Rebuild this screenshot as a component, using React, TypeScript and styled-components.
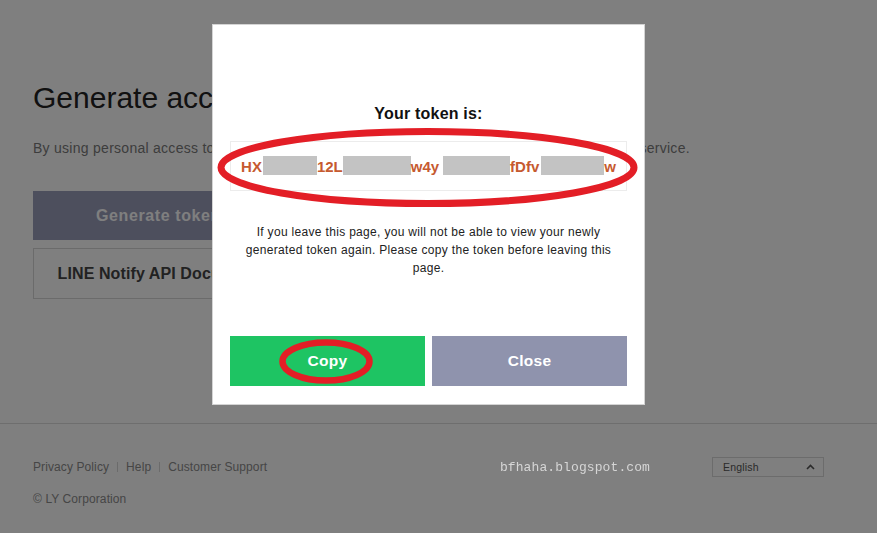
import React from "react";
import styled, { createGlobalStyle } from "styled-components";

const GlobalStyle = createGlobalStyle`
  html, body { margin: 0; padding: 0; }
  body {
    background: #ffffff;
    font-family: "Liberation Sans", Arial, sans-serif;
    color: #222;
  }
  * { box-sizing: border-box; }
`;

const Page = styled.div`
  min-height: 533px;
  display: flex;
  flex-direction: column;
  background: #ffffff;
`;

const Main = styled.main`
  height: 423px;
  padding: 80px 33px 0;
`;

const Title = styled.h1`
  margin: 0;
  font-size: 30px;
  line-height: 36px;
  font-weight: 400;
  color: #222;
  white-space: nowrap;
`;

const Lead = styled.p`
  margin: 22px 0 0;
  font-size: 14px;
  line-height: 20px;
  letter-spacing: 0.27px;
  color: #7a7a7a;
  white-space: nowrap;
`;

const ButtonStack = styled.div`
  margin-top: 33px;
  width: 251px;
  display: flex;
  flex-direction: column;
  gap: 8px;
`;

const PageButton = styled.button<{ $variant: "filled" | "outline" }>`
  height: ${(p) => (p.$variant === "filled" ? "49px" : "51px")};
  width: 100%;
  border: 1px solid ${(p) => (p.$variant === "filled" ? "#9a9ebb" : "#d6d6d6")};
  background: ${(p) => (p.$variant === "filled" ? "#9a9ebb" : "#ffffff")};
  color: ${(p) => (p.$variant === "filled" ? "#ffffff" : "#444444")};
  font-family: "Liberation Sans", Arial, sans-serif;
  font-size: 16px;
  font-weight: 700;
  letter-spacing: ${(p) => (p.$variant === "filled" ? "0.6px" : "0.1px")};
  padding: 0;
  text-align: center;
  white-space: nowrap;
`;

const Footer = styled.footer`
  border-top: 1px solid #dcdcdc;
  padding: 33px 53px 0 33px;
  flex: 1;
`;

const FooterRow = styled.div`
  display: flex;
  align-items: center;
  height: 20px;
`;

const Links = styled.nav`
  display: flex;
  align-items: center;
  font-size: 12px;
  letter-spacing: 0.1px;
  color: #8c8c8c;
`;

const Sep = styled.span`
  display: inline-block;
  width: 0;
  height: 10px;
  border-left: 1px solid #d6d6d6;
  margin: 0 8px;
`;

const Watermark = styled.span`
  position: relative;
  z-index: 20;
  margin-left: auto;
  font-family: "Liberation Mono", "DejaVu Sans Mono", monospace;
  font-size: 13px;
  color: #d6d6d6;
  letter-spacing: 0.1px;
`;

const LangSelect = styled.div`
  margin-left: 62px;
  width: 112px;
  height: 20px;
  border: 1px solid #d8d8d8;
  display: flex;
  align-items: center;
  justify-content: space-between;
  padding: 0 8px 0 10px;
  font-size: 10.5px;
  font-weight: 400;
  letter-spacing: 0.2px;
  color: #555555;
`;

const Copyright = styled.div`
  margin-top: 14px;
  font-size: 12px;
  line-height: 16px;
  letter-spacing: 0.1px;
  color: #8c8c8c;
`;

const Overlay = styled.div`
  position: fixed;
  inset: 0;
  z-index: 10;
  background: rgba(0, 0, 0, 0.5);
  padding: 24px 0 0 212px;
`;

const Modal = styled.div`
  position: relative;
  width: 433px;
  height: 381px;
  background: #ffffff;
  border: 1px solid #d4d4d4;
  padding: 79px 17px 18px;
  display: flex;
  flex-direction: column;
  align-items: center;
`;

const TokenLabel = styled.div`
  font-size: 16px;
  line-height: 20px;
  font-weight: 700;
  letter-spacing: 0.2px;
  color: #111;
`;

const TokenBox = styled.div`
  margin-top: 17px;
  width: 100%;
  height: 50px;
  border: 1px solid #ececec;
  display: flex;
  align-items: center;
  justify-content: center;
  font-size: 15px;
  font-weight: 700;
  color: #c65a30;
  white-space: nowrap;
`;

const Redact = styled.span<{ $w: number; $ml?: number }>`
  display: inline-block;
  width: ${(p) => p.$w}px;
  height: 19px;
  margin-left: ${(p) => p.$ml ?? 0}px;
  margin-top: -2px;
  background: #c3c3c3;
`;

const Notice = styled.p`
  margin: 32px 0 0;
  width: 100%;
  padding: 0 4px;
  font-size: 12px;
  line-height: 18px;
  letter-spacing: 0.32px;
  text-align: center;
  color: #222;
`;

const ActionRow = styled.div`
  margin-top: auto;
  width: 100%;
  display: flex;
  gap: 7px;
`;

const ActionButton = styled.button<{ $tone: "green" | "gray" }>`
  flex: 1;
  height: 50px;
  border: none;
  background: ${(p) => (p.$tone === "green" ? "#1ec463" : "#8f93ad")};
  color: #ffffff;
  font-family: "Liberation Sans", Arial, sans-serif;
  font-size: 15.5px;
  font-weight: 700;
  letter-spacing: 0.3px;
  padding: 0;
`;

const Annotation = styled.svg<{ $l: number; $t: number }>`
  position: absolute;
  left: ${(p) => p.$l}px;
  top: ${(p) => p.$t}px;
  overflow: visible;
  pointer-events: none;
`;

export default function App() {
  return (
    <>
      <GlobalStyle />
      <Page>
        <Main>
          <Title>Generate access token (For developers)</Title>
          <Lead>
            By using personal access tokens, you can configure notifications
            without having to add a web service.
          </Lead>
          <ButtonStack>
            <PageButton $variant="filled">Generate token</PageButton>
            <PageButton $variant="outline">LINE Notify API Document</PageButton>
          </ButtonStack>
        </Main>
        <Footer>
          <FooterRow>
            <Links>
              <span>Privacy Policy</span>
              <Sep />
              <span>Help</span>
              <Sep />
              <span>Customer Support</span>
            </Links>
            <Watermark>bfhaha.blogspot.com</Watermark>
            <LangSelect>
              <span>English</span>
              <svg width="9" height="6" viewBox="0 0 9 6">
                <polyline
                  points="1,5 4.5,1.5 8,5"
                  fill="none"
                  stroke="#555555"
                  strokeWidth="1.6"
                />
              </svg>
            </LangSelect>
          </FooterRow>
          <Copyright>© LY Corporation</Copyright>
        </Footer>
      </Page>
      <Overlay>
        <Modal>
          <TokenLabel>Your token is:</TokenLabel>
          <TokenBox>
            <span>HX</span>
            <Redact $w={54} $ml={1} />
            <span>12L</span>
            <Redact $w={68} />
            <span>w4y</span>
            <Redact $w={67} $ml={4} />
            <span>fDfv</span>
            <Redact $w={63} $ml={2} />
            <span>w</span>
          </TokenBox>
          <Notice>
            If you leave this page, you will not be able to view your newly
            generated token again. Please copy the token before leaving this
            page.
          </Notice>
          <ActionRow>
            <ActionButton $tone="green">Copy</ActionButton>
            <ActionButton $tone="gray">Close</ActionButton>
          </ActionRow>
          <Annotation $l={4} $t={103} width="421" height="79" viewBox="0 0 421 79">
            <ellipse
              cx="210.5"
              cy="39.5"
              rx="206.5"
              ry="36"
              fill="none"
              stroke="#e31e26"
              strokeWidth="7"
            />
          </Annotation>
          <Annotation $l={66} $t={314} width="94" height="45" viewBox="0 0 94 45">
            <ellipse
              cx="47"
              cy="22.5"
              rx="43.5"
              ry="19"
              fill="none"
              stroke="#e31e26"
              strokeWidth="6.5"
            />
          </Annotation>
        </Modal>
      </Overlay>
    </>
  );
}
